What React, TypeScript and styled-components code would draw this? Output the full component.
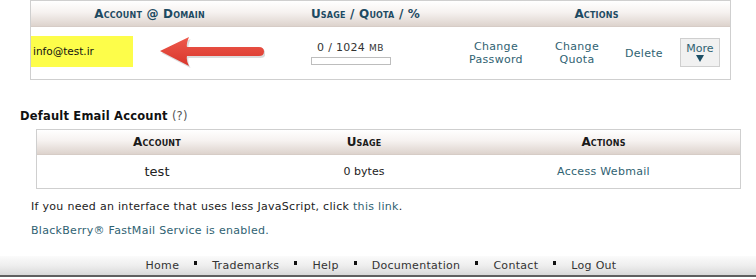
import React from "react";
import styled, { createGlobalStyle } from "styled-components";

const Global = createGlobalStyle`
  html, body { margin: 0; padding: 0; background: #fff; }
  body { font-family: "DejaVu Sans", Verdana, sans-serif; font-size: 11px; color: #222; }
`;

const Page = styled.div`
  width: 756px;
  height: 279px;
  overflow: hidden;
  display: flex;
  flex-direction: column;
`;

const Table = styled.div<{ $left: number; $width: number; $top: number }>`
  margin-left: ${(p) => p.$left}px;
  margin-top: ${(p) => p.$top}px;
  width: ${(p) => p.$width}px;
  box-sizing: border-box;
  border: 1px solid #cfcfcf;
`;

const Row = styled.div<{ $cols: string; $h: number; $head?: boolean }>`
  display: grid;
  grid-template-columns: ${(p) => p.$cols};
  height: ${(p) => p.$h}px;
  align-items: center;
  background: ${(p) =>
    p.$head ? "linear-gradient(#ffffff 0%, #f6f2f0 45%, #ddd3cd 100%)" : "#fff"};
  border-bottom: ${(p) => (p.$head ? "1px solid #d6ccc6" : "none")};
`;

const HeadCell = styled.div<{ $dark?: boolean; $pad?: number }>`
  text-align: center;
  font-weight: bold;
  font-variant: small-caps;
  font-size: 12px;
  letter-spacing: 0.2px;
  color: ${(p) => (p.$dark ? "#1a1a1a" : "#1d4a62")};
  padding-left: ${(p) => p.$pad ?? 0}px;
`;

const Cell = styled.div<{ $padL?: number; $padR?: number; $size?: number }>`
  text-align: center;
  padding-left: ${(p) => p.$padL ?? 0}px;
  padding-right: ${(p) => p.$padR ?? 0}px;
  font-size: ${(p) => p.$size ?? 11}px;
`;

const AccountCell = styled.div`
  display: flex;
  align-items: center;
  height: 100%;
  padding-bottom: 4px;
  box-sizing: border-box;
`;

const Highlight = styled.div`
  width: 102px;
  height: 31px;
  background: #fdfd4a;
  display: flex;
  align-items: center;
  padding-left: 2px;
  box-sizing: border-box;
  font-family: "DejaVu Sans", Tahoma, sans-serif;
  font-size: 10.5px;
  color: #111;
`;

const Arrow = styled.svg`
  margin-left: 26px;
  margin-top: 3px;
  display: block;
`;

const UsageText = styled.div`
  font-size: 11px;
  color: #333;
  letter-spacing: 0.3px;
`;

const Unit = styled.span`
  font-size: 9px;
  letter-spacing: 0.5px;
`;

const Bar = styled.div`
  width: 78px;
  height: 6px;
  margin: 3px auto 0;
  border: 1px solid #bdbdbd;
  background: #fff;
`;

const ActionsGrid = styled.div`
  display: grid;
  grid-template-columns: 66px 96px 34px 1fr;
  align-items: center;
`;

const Link = styled.a`
  color: #2f6272;
  text-decoration: none;
  line-height: 13px;
  letter-spacing: 0.3px;
`;

const ActionLink = styled(Link)`
  display: block;
  text-align: center;
`;

const MoreWrap = styled.div`
  padding-left: 21px;
  padding-bottom: 2px;
`;

const MoreButton = styled.div`
  width: 40px;
  height: 29px;
  box-sizing: border-box;
  border: 1px solid #cfcfcf;
  background: #f1f1f1;
  display: flex;
  flex-direction: column;
  align-items: center;
  padding-top: 4px;
  color: #2f6272;
  font-size: 11px;
  line-height: 11px;
`;

const Tri = styled.div`
  width: 0;
  height: 0;
  border-left: 4px solid transparent;
  border-right: 4px solid transparent;
  border-top: 7px solid #1d4f66;
  margin-top: 1px;
`;

const SectionTitle = styled.div`
  margin: 29px 0 0 20px;
  font-weight: bold;
  font-size: 11.5px;
  color: #111;
  letter-spacing: 0.2px;
`;

const Help = styled.span`
  font-weight: normal;
  color: #555;
`;

const Para = styled.p<{ $top: number }>`
  margin: ${(p) => p.$top}px 0 0 31px;
  font-size: 11px;
  color: #222;
  letter-spacing: 0.3px;
  line-height: 13px;
`;

const Footer = styled.div`
  margin-top: 19px;
  height: 19px;
  background: linear-gradient(#fbfbfb 0%, #eeeeee 50%, #d9d9d9 100%);
  border-bottom: 2px solid #5f5f5f;
  display: flex;
  justify-content: center;
  align-items: center;
  padding-left: 6px;
`;

const FootLink = styled.a`
  color: #333;
  text-decoration: none;
  font-size: 11px;
  letter-spacing: 0.3px;
`;

const Sep = styled.span`
  width: 3px;
  height: 4px;
  background: #111;
  margin: 0 15px 5px;
`;

export default function App() {
  const footer = ["Home", "Trademarks", "Help", "Documentation", "Contact", "Log Out"];
  return (
    <>
      <Global />
      <Page>
        <Table $left={30} $width={701} $top={0}>
          <Row $cols="237px 195px 267px" $h={25} $head>
            <HeadCell>Account @ Domain</HeadCell>
            <HeadCell>Usage / Quota / %</HeadCell>
            <HeadCell>Actions</HeadCell>
          </Row>
          <Row $cols="237px 195px 267px" $h={52}>
            <AccountCell>
              <Highlight>info@test.ir</Highlight>
              <Arrow width="106" height="34" viewBox="0 0 106 34">
                <defs>
                  <linearGradient id="ag" x1="0" y1="0" x2="0" y2="1">
                    <stop offset="0" stopColor="#ee5a4c" />
                    <stop offset="1" stopColor="#d8352b" />
                  </linearGradient>
                </defs>
                <path
                  d="M1 15 L30 1 Q27 8 28 11 L100 11 Q105 11 105 15.5 Q105 20 100 20 L28 20 Q27 24 30 30 Z"
                  fill="#b9b9b9"
                  opacity="0.5"
                  transform="translate(1.5,2)"
                />
                <path
                  d="M1 15 L30 1 Q27 8 28 11 L100 11 Q105 11 105 15.5 Q105 20 100 20 L28 20 Q27 24 30 30 Z"
                  fill="url(#ag)"
                />
              </Arrow>
            </AccountCell>
            <Cell $padR={30}>
              <UsageText>
                0 / 1024 <Unit>MB</Unit>
              </UsageText>
              <Bar />
            </Cell>
            <ActionsGrid>
              <ActionLink href="#">
                Change
                <br />
                Password
              </ActionLink>
              <ActionLink href="#">
                Change
                <br />
                Quota
              </ActionLink>
              <ActionLink href="#">Delete</ActionLink>
              <MoreWrap>
                <MoreButton>
                  More
                  <Tri />
                </MoreButton>
              </MoreWrap>
            </ActionsGrid>
          </Row>
        </Table>

        <SectionTitle>
          Default Email Account <Help>(?)</Help>
        </SectionTitle>

        <Table $left={36} $width={705} $top={6}>
          <Row $cols="240px 174px 1fr" $h={24} $head>
            <HeadCell $dark>Account</HeadCell>
            <HeadCell $dark>Usage</HeadCell>
            <HeadCell $dark $pad={16}>Actions</HeadCell>
          </Row>
          <Row $cols="240px 174px 1fr" $h={33}>
            <Cell $size={13}>test</Cell>
            <Cell>0 bytes</Cell>
            <Cell $padL={16}>
              <Link href="#">Access Webmail</Link>
            </Cell>
          </Row>
        </Table>

        <Para $top={11}>
          If you need an interface that uses less JavaScript, click <Link href="#">this link</Link>.
        </Para>
        <Para $top={11}>
          <Link href="#">BlackBerry® FastMail Service is enabled.</Link>
        </Para>

        <Footer>
          {footer.map((f, i) => (
            <React.Fragment key={f}>
              {i > 0 && <Sep />}
              <FootLink href="#">{f}</FootLink>
            </React.Fragment>
          ))}
        </Footer>
      </Page>
    </>
  );
}
